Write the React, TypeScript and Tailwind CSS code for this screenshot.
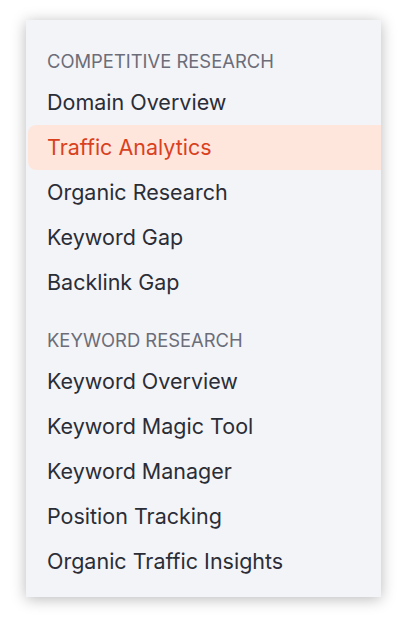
const sections = [
  {
    title: "Competitive Research",
    items: ["Domain Overview", "Traffic Analytics", "Organic Research", "Keyword Gap", "Backlink Gap"],
  },
  {
    title: "Keyword Research",
    items: [
      "Keyword Overview",
      "Keyword Magic Tool",
      "Keyword Manager",
      "Position Tracking",
      "Organic Traffic Insights",
    ],
  },
];

const active = "Traffic Analytics";

export default function App() {
  return (
    <div className="min-h-[622px] w-[402px] bg-white pt-[20px] pl-[26px]" style={{ fontFamily: "Inter, sans-serif" }}>
      <div className="flex w-[355px] flex-col gap-[18px] bg-[#f3f4f8] pt-[24px] pb-[13px] shadow-[0_2px_14px_rgba(0,0,0,0.28)]">
        {sections.map((section) => (
          <div key={section.title} className="flex flex-col">
            <p className="flex h-9 items-center pl-[21px] text-[18.4px] uppercase text-[#6b6d78]">
              {section.title}
            </p>
            {section.items.map((item) => {
              const isActive = item === active;
              return (
                <div
                  key={item}
                  className={`ml-[2px] flex h-[45px] items-center pl-[19px] text-[21.5px] ${
                    isActive ? "rounded-l-lg bg-[#ffe6dd] text-[#d9411e]" : "text-[#2b2d36]"
                  }`}
                >
                  {item}
                </div>
              );
            })}
          </div>
        ))}
      </div>
    </div>
  );
}
